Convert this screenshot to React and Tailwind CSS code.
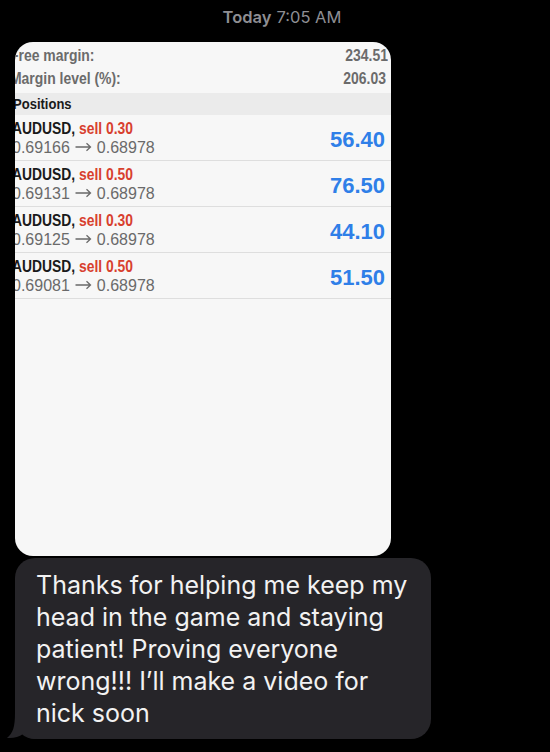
import React from "react";

const rows = [
  { side: "sell 0.30", price: "0.69166", profit: "56.40" },
  { side: "sell 0.50", price: "0.69131", profit: "76.50" },
  { side: "sell 0.30", price: "0.69125", profit: "44.10" },
  { side: "sell 0.50", price: "0.69081", profit: "51.50" },
];

function Arrow() {
  return (
    <svg className="inline-block mx-[5px] align-middle -mt-[2px]" width="17" height="10" viewBox="0 0 17 10">
      <path d="M0.5 5 H15.5 M11.5 1.2 L15.5 5 L11.5 8.8" stroke="#6a6a6a" strokeWidth="1.3" fill="none" />
    </svg>
  );
}

export default function App() {
  return (
    <div className="w-[550px] h-[752px] bg-black overflow-hidden relative" style={{ fontFamily: "Inter, 'Liberation Sans', sans-serif" }}>
      <div className="h-[42px] flex items-center justify-center pl-[14px] pb-[7px] text-[16.5px] text-[#8e8e93]">
        <span className="font-semibold">Today</span>
        <span className="ml-[5px]">7:05 AM</span>
      </div>
      <div className="ml-[15px] w-[376px] h-[514px] rounded-[18px] overflow-hidden bg-[#f7f7f7]" style={{ fontFamily: "'Liberation Sans', Arial, sans-serif" }}>
        <div className="-ml-[5px] mr-[3px]">
          <div className="h-[25px] pt-[2px] flex items-center justify-between font-bold text-[17px] text-[#6b6b6b]">
            <span className="inline-block origin-left scale-x-[0.82] whitespace-nowrap">Free margin:</span>
            <span className="inline-block origin-right scale-x-[0.82]">234.51</span>
          </div>
          <div className="h-[23px] flex items-center justify-between font-bold text-[17px] text-[#6b6b6b] pr-[2px]">
            <span className="inline-block origin-left scale-x-[0.82] whitespace-nowrap">Margin level (%):</span>
            <span className="inline-block origin-right scale-x-[0.82]">206.03</span>
          </div>
          <div className="h-[3px]" />
          <div className="h-[22px] flex items-center bg-[#ebebeb] font-bold text-[15.5px] text-[#1a1a1a] -mr-[3px]">
            <span className="inline-block ml-[3px] origin-left scale-x-[0.84]">Positions</span>
          </div>
          {rows.map((r, i) => (
            <div key={i} className="h-[46px] flex items-center justify-between border-b border-[#dedede] pr-[6px] -mr-[3px]">
              <div className="flex flex-col ml-[2px]">
                <div className="text-[16.5px] font-bold leading-[20px] origin-left scale-x-[0.84] whitespace-nowrap">
                  <span className="text-[#1a1a1a]">AUDUSD, </span>
                  <span className="text-[#d8402e]">{r.side}</span>
                </div>
                <div className="text-[16px] leading-[20px] text-[#6a6a6a] whitespace-nowrap">
                  {r.price}<Arrow />0.68978
                </div>
              </div>
              <div className="text-[22px] font-bold text-[#2f7fe8] mt-[3px]">{r.profit}</div>
            </div>
          ))}
        </div>
      </div>
      <div className="relative ml-[15px] mt-[2px] w-[416px] h-[181px] rounded-[20px] bg-[#262529] pl-[21px] pr-[10px] pt-[11px] text-[25px] leading-[32px] text-[#f2f2f2]">
        Thanks for helping me keep my head in the game and staying patient! Proving everyone wrong!!! I’ll make a video for nick soon
        <svg className="absolute left-[-8px] bottom-0" width="30" height="26" viewBox="0 0 30 26">
          <path d="M8 0 C8 14 6 20 0 25 C6 25.6 12 24 16 21 C20 24 26 26 30 26 L30 0 Z" fill="#262529" />
        </svg>
      </div>
    </div>
  );
}
